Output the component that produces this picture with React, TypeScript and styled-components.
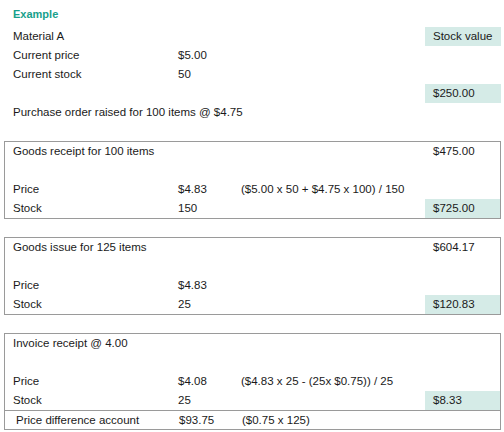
import React from "react";
import styled, { createGlobalStyle } from "styled-components";

const Global = createGlobalStyle`
  html, body { margin: 0; padding: 0; background: #ffffff; }
  body { font-family: "Liberation Sans", Arial, sans-serif; font-size: 11.5px; color: #1a1a1a; }
`;

const Page = styled.div`
  width: 497px;
  padding: 5px 0 0 4px;
`;

const Title = styled.div`
  height: 19px;
  line-height: 19px;
  padding-left: 9px;
  margin-bottom: 3px;
  font-weight: bold;
  color: #17a08b;
  font-size: 11px;
`;

const Intro = styled.div`
  padding-left: 9px;
  display: grid;
  grid-template-columns: 165px 63px 1fr 76px;
  grid-auto-rows: 19px;
  margin-bottom: 19px;
`;

const Box = styled.div`
  border: 1px solid #9a9a9a;
  margin-bottom: 18px;
`;

const Grid = styled.div<{ $divider?: boolean }>`
  display: grid;
  grid-template-columns: 165px 63px 1fr 75px;
  grid-auto-rows: 19px;
  padding-left: 8px;
  ${(p) => (p.$divider ? "border-bottom: 1px solid #9a9a9a;" : "")}
`;

const Cell = styled.div<{ $shade?: boolean; $span?: number }>`
  line-height: 19px;
  white-space: nowrap;
  ${(p) => (p.$shade ? "background: #d5ebe7; padding-left: 8px;" : "")}
  ${(p) => (p.$span ? `grid-column: span ${p.$span};` : "")}
`;

const Value = styled(Cell)`
  padding-left: 8px;
`;

const FooterRow = styled.div`
  display: grid;
  grid-template-columns: 163px 63px 1fr;
  height: 18px;
  line-height: 18px;
  padding-left: 11px;
`;

const Empty = () => <Cell $span={4} />;

export default function App() {
  return (
    <>
      <Global />
      <Page>
        <Title>Example</Title>
        <Intro>
          <Cell>Material A</Cell>
          <Cell />
          <Cell />
          <Cell $shade>Stock value</Cell>
          <Cell>Current price</Cell>
          <Cell>$5.00</Cell>
          <Cell />
          <Cell />
          <Cell>Current stock</Cell>
          <Cell>50</Cell>
          <Cell />
          <Cell />
          <Cell />
          <Cell />
          <Cell />
          <Cell $shade>$250.00</Cell>
          <Cell $span={4}>Purchase order raised for 100 items @ $4.75</Cell>
        </Intro>

        <Box>
          <Grid>
            <Cell $span={3}>Goods receipt for 100 items</Cell>
            <Value>$475.00</Value>
            <Empty />
            <Cell>Price</Cell>
            <Cell>$4.83</Cell>
            <Cell>($5.00 x 50 + $4.75 x 100) / 150</Cell>
            <Cell />
            <Cell>Stock</Cell>
            <Cell>150</Cell>
            <Cell />
            <Cell $shade>$725.00</Cell>
          </Grid>
        </Box>

        <Box>
          <Grid>
            <Cell $span={3}>Goods issue for 125 items</Cell>
            <Value>$604.17</Value>
            <Empty />
            <Cell>Price</Cell>
            <Cell>$4.83</Cell>
            <Cell />
            <Cell />
            <Cell>Stock</Cell>
            <Cell>25</Cell>
            <Cell />
            <Cell $shade>$120.83</Cell>
          </Grid>
        </Box>

        <Box>
          <Grid $divider>
            <Cell $span={4}>Invoice receipt @ 4.00</Cell>
            <Empty />
            <Cell>Price</Cell>
            <Cell>$4.08</Cell>
            <Cell>($4.83 x 25 - (25x $0.75)) / 25</Cell>
            <Cell />
            <Cell>Stock</Cell>
            <Cell>25</Cell>
            <Cell />
            <Cell $shade>$8.33</Cell>
          </Grid>
          <FooterRow>
            <div>Price difference account</div>
            <div>$93.75</div>
            <div>($0.75 x 125)</div>
          </FooterRow>
        </Box>
      </Page>
    </>
  );
}
